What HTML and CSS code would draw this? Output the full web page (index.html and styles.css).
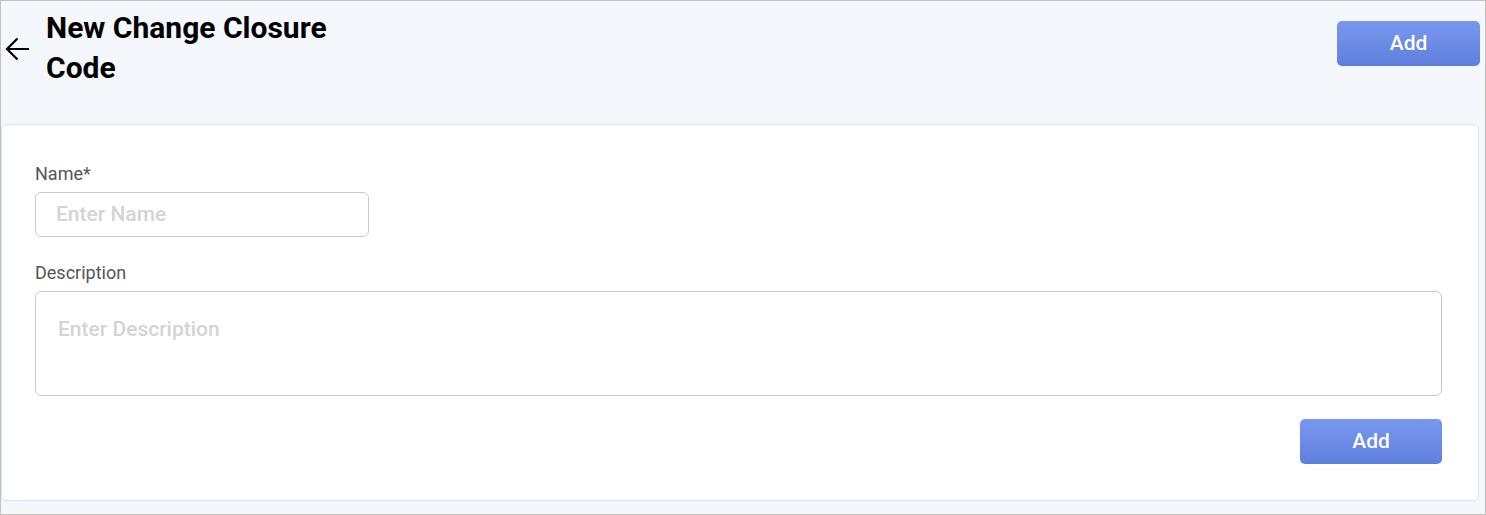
FILE: index.html
```html
<!DOCTYPE html>
<html>
<head>
<meta charset="utf-8">
<link rel="stylesheet" href="styles.css">
</head>
<body>
<div class="frame">
  <header class="header">
    <div class="title-wrap">
      <button class="back" aria-label="Back">
        <svg width="24" height="24" viewBox="0 0 24 24"><path d="M2 12H24M12.5 1.5L2 12l10.5 10.5" fill="none" stroke="#000" stroke-width="2.2"/></svg>
      </button>
      <h1 class="title">New Change Closure Code</h1>
    </div>
    <button class="btn btn-top">Add</button>
  </header>
  <section class="card">
    <label class="label">Name*</label>
    <input class="input input-name" placeholder="Enter Name">
    <label class="label label-desc">Description</label>
    <textarea class="input textarea" placeholder="Enter Description"></textarea>
    <div class="actions"><button class="btn">Add</button></div>
  </section>
</div>
</body>
</html>
```
FILE: styles.css
```css
* { box-sizing: border-box; }
html, body { margin: 0; padding: 0; }
body { font-family: Roboto, "Liberation Sans", sans-serif; }
.frame {
  width: 1486px;
  height: 515px;
  border: 1px solid #c2c2c2;
  background: #f4f7fc;
  display: flex;
  flex-direction: column;
}
.header {
  height: 123px;
  display: flex;
  justify-content: space-between;
  align-items: flex-start;
  padding: 7px 5px 0 4px;
}
.title-wrap { display: flex; align-items: flex-start; }
.back {
  border: 0; background: none; padding: 0;
  width: 24px; height: 24px;
  margin-top: 29px;
  display: flex;
}
.title {
  margin: 0 0 0 17px;
  width: 300px;
  font-size: 30px;
  line-height: 40px;
  font-weight: 700;
  color: #000;
}
.btn {
  width: 142px;
  height: 45px;
  border: 0;
  border-radius: 5px;
  background: linear-gradient(180deg, #7898ef 0%, #5f7fdd 100%);
  color: #fff;
  font-family: Roboto, "Liberation Sans", sans-serif;
  font-size: 21px;
  font-weight: 500;
  padding: 0 0 2px;
}
.btn-top { margin-top: 13px; width: 143px; }
.card {
  width: 1478px;
  height: 377px;
  background: #fff;
  border: 1px solid #d3e5f6;
  border-radius: 5px;
  padding: 39px 36px 0 33px;
  display: flex;
  flex-direction: column;
  align-items: flex-start;
}
.label {
  font-size: 18px;
  line-height: 20px;
  color: #555;
  margin-bottom: 8px;
}
.label-desc { margin-top: 26px; }
.input {
  border: 1px solid #c8c8c8;
  border-radius: 6px;
  font-family: Roboto, "Liberation Sans", sans-serif;
  font-size: 21px;
  font-weight: 500;
  color: #333;
  outline: none;
  background: #fff;
}
.input::placeholder { color: #d4d4d4; }
.input-name {
  width: 334px;
  height: 45px;
  padding: 0 20px 2px;
}
.textarea {
  width: 100%;
  height: 105px;
  resize: none;
  padding: 24px 22px;
  line-height: 26px;
}
.actions {
  width: 100%;
  display: flex;
  justify-content: flex-end;
  margin-top: 23px;
}
```
